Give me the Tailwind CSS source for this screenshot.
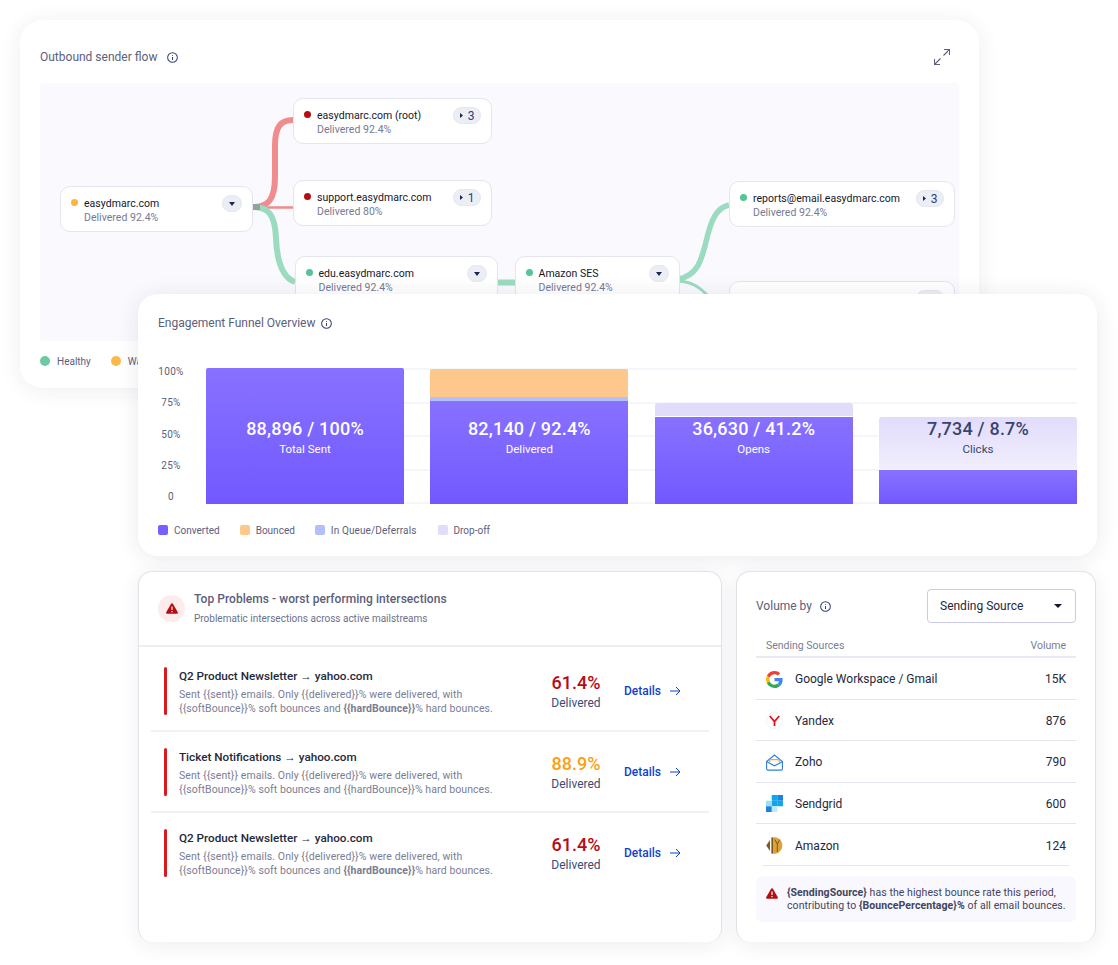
<!DOCTYPE html>
<html lang="en">
<head>
    <meta charset="UTF-8">
    <meta name="viewport" content="width=device-width, initial-scale=1.0">
    <title>Sender dashboard</title>
    <script src="https://cdn.jsdelivr.net/npm/@tailwindcss/browser@4"></script>
</head>
<body class="bg-white font-['Roboto',sans-serif] w-[1118px] h-[965px] overflow-hidden">
    <div class="pt-[20px] pl-[20px]">

        <!-- sender flow card -->
        <section class="w-[959px] h-[368px] bg-white rounded-[22px] shadow-[0_2px_22px_rgba(40,40,90,0.08)] pt-[29px] px-[20px]">
            <div class="flex items-center justify-between h-[16px]">
                <div class="flex items-center gap-[10px]">
                    <h2 class="text-[12px] leading-[16px] text-[#5b607c]">Outbound sender flow</h2>
                    <svg class="w-[11px] h-[11px]" viewBox="0 0 12 12" fill="none" stroke="#2f4078" stroke-width="1.1"><circle cx="6" cy="6" r="5.3"/><path d="M6 5.400v3.200M6 3.200v1"/></svg>
                </div>
                <svg class="w-[16px] h-[16px] mr-[9px]" viewBox="0 0 16 16" fill="none" stroke="#5b607c" stroke-width="1.100"><path d="M9.500 6.500 15.500.5M10 .5h5.500V6M6.500 9.500l-6 6M.5 10v5.500H6"/></svg>
            </div>

            <div class="relative mt-[18px] w-[919px] h-[258px] bg-[#f9f9fe] rounded-[4px]">
                <svg class="absolute inset-0 w-[919px] h-[258px]" viewBox="40 83 919 258" fill="none">
                    <path d="M253 207C268 207 275 200 275 176L275 146C275 126 281 120 293 120" stroke="#f08b8e" stroke-width="6"/>
                    <path d="M253 207.500H293" stroke="#f08b8e" stroke-width="2.500"/>
                    <path d="M253 207C268 207 275 214 276 238C277 264 284 278 295 282" stroke="#9bdbbf" stroke-width="6"/>
                    <path d="M253 204h7v6h-7z" fill="#8fa595"/>
                    <path d="M497 282.500H515" stroke="#9bdbbf" stroke-width="6"/>
                    <path d="M679 279C697 275 701 262 706 242C711 220 716 208 729 205" stroke="#9bdbbf" stroke-width="5.500"/>
                    <path d="M679 281C695 282 703 290 716 304" stroke="#9bdbbf" stroke-width="3"/>
                </svg>

                <div class="absolute left-[20px] top-[103px] w-[193px] h-[46px] flex items-start gap-[6px] bg-white border border-[#e5e5f2] rounded-[10px] pl-[10px] pr-[10px] pt-[10px]">
                    <span class="w-[7px] h-[7px] mt-[2px] rounded-full bg-[#fdb33e] shrink-0"></span>
                    <div class="text-[10.500px] leading-[14px] tracking-[0.03px]"><p class="text-[#14172b]">easydmarc.com</p><p class="text-[#767a92]">Delivered 92.4%</p></div>
                    <span class="ml-auto -mt-[2px] w-[20px] h-[17px] rounded-full bg-[#eceef6] border border-[#e4e6f0] flex items-center justify-center"><svg class="w-[6px] h-[4px]" viewBox="0 0 6 4"><path d="M0 0h6L3 4z" fill="#1c2550"/></svg></span>
                </div>

                <div class="absolute left-[253px] top-[15px] w-[199px] h-[46px] flex items-start gap-[6px] bg-white border border-[#e5e5f2] rounded-[10px] pl-[10px] pr-[10px] pt-[10px]">
                    <span class="w-[7px] h-[7px] mt-[2px] rounded-full bg-[#b50d12] shrink-0"></span>
                    <div class="text-[10.500px] leading-[14px] tracking-[0.03px]"><p class="text-[#14172b]">easydmarc.com (root)</p><p class="text-[#767a92]">Delivered 92.4%</p></div>
                    <span class="ml-auto -mt-[2px] w-[28px] h-[17px] rounded-full bg-[#eceef6] border border-[#e4e6f0] flex items-center justify-center gap-[5px] text-[12px] text-[#2f4078]"><svg class="w-[3px] h-[5px]" viewBox="0 0 3 5"><path d="M0 0v5l3-2.500z" fill="#1c2550"/></svg>3</span>
                </div>

                <div class="absolute left-[253px] top-[97px] w-[199px] h-[46px] flex items-start gap-[6px] bg-white border border-[#e5e5f2] rounded-[10px] pl-[10px] pr-[10px] pt-[10px]">
                    <span class="w-[7px] h-[7px] mt-[2px] rounded-full bg-[#b50d12] shrink-0"></span>
                    <div class="text-[10.500px] leading-[14px] tracking-[0.03px]"><p class="text-[#14172b]">support.easydmarc.com</p><p class="text-[#767a92]">Delivered 80%</p></div>
                    <span class="ml-auto -mt-[2px] w-[28px] h-[17px] rounded-full bg-[#eceef6] border border-[#e4e6f0] flex items-center justify-center gap-[5px] text-[12px] text-[#2f4078]"><svg class="w-[3px] h-[5px]" viewBox="0 0 3 5"><path d="M0 0v5l3-2.500z" fill="#1c2550"/></svg>1</span>
                </div>

                <div class="absolute left-[254.500px] top-[173px] w-[203px] h-[46px] flex items-start gap-[6px] bg-white border border-[#e5e5f2] rounded-[10px] pl-[10px] pr-[10px] pt-[10px]">
                    <span class="w-[7px] h-[7px] mt-[2px] rounded-full bg-[#54c596] shrink-0"></span>
                    <div class="text-[10.500px] leading-[14px] tracking-[0.03px]"><p class="text-[#14172b]">edu.easydmarc.com</p><p class="text-[#767a92]">Delivered 92.4%</p></div>
                    <span class="ml-auto -mt-[2px] w-[20px] h-[17px] rounded-full bg-[#eceef6] border border-[#e4e6f0] flex items-center justify-center"><svg class="w-[6px] h-[4px]" viewBox="0 0 6 4"><path d="M0 0h6L3 4z" fill="#1c2550"/></svg></span>
                </div>

                <div class="absolute left-[474.500px] top-[173px] w-[165px] h-[46px] flex items-start gap-[6px] bg-white border border-[#e5e5f2] rounded-[10px] pl-[10px] pr-[10px] pt-[10px]">
                    <span class="w-[7px] h-[7px] mt-[2px] rounded-full bg-[#54c596] shrink-0"></span>
                    <div class="text-[10.500px] leading-[14px] tracking-[0.03px]"><p class="text-[#14172b]">Amazon SES</p><p class="text-[#767a92]">Delivered 92.4%</p></div>
                    <span class="ml-auto -mt-[2px] w-[20px] h-[17px] rounded-full bg-[#eceef6] border border-[#e4e6f0] flex items-center justify-center"><svg class="w-[6px] h-[4px]" viewBox="0 0 6 4"><path d="M0 0h6L3 4z" fill="#1c2550"/></svg></span>
                </div>

                <div class="absolute left-[689px] top-[98px] w-[226px] h-[46px] flex items-start gap-[6px] bg-white border border-[#e5e5f2] rounded-[10px] pl-[10px] pr-[10px] pt-[10px]">
                    <span class="w-[7px] h-[7px] mt-[2px] rounded-full bg-[#54c596] shrink-0"></span>
                    <div class="text-[10.500px] leading-[14px] tracking-[0.03px]"><p class="text-[#14172b]">reports@email.easydmarc.com</p><p class="text-[#767a92]">Delivered 92.4%</p></div>
                    <span class="ml-auto -mt-[2px] w-[28px] h-[17px] rounded-full bg-[#eceef6] border border-[#e4e6f0] flex items-center justify-center gap-[5px] text-[12px] text-[#2f4078]"><svg class="w-[3px] h-[5px]" viewBox="0 0 3 5"><path d="M0 0v5l3-2.500z" fill="#1c2550"/></svg>3</span>
                </div>

                <div class="absolute left-[689px] top-[198px] w-[226px] h-[46px] flex items-start gap-[6px] bg-white border border-[#e5e5f2] rounded-[10px] pl-[10px] pr-[10px] pt-[10px]">
                    <span class="w-[7px] h-[7px] mt-[2px] rounded-full bg-[#54c596] shrink-0"></span>
                    <div class="text-[10.500px] leading-[14px] tracking-[0.03px]"><p class="text-[#14172b]">support@mail.easydmarc.com</p><p class="text-[#767a92]">Delivered 92.4%</p></div>
                    <span class="ml-auto -mt-[2px] w-[28px] h-[17px] rounded-full bg-[#eceef6] border border-[#e4e6f0] flex items-center justify-center gap-[5px] text-[12px] text-[#2f4078]"><svg class="w-[3px] h-[5px]" viewBox="0 0 3 5"><path d="M0 0v5l3-2.500z" fill="#1c2550"/></svg>1</span>
                </div>
            </div>

            <div class="flex items-center mt-[13px] h-[14px] text-[10px] text-[#5b607c]">
                <span class="w-[10px] h-[10px] rounded-full bg-[#6cc9a1]"></span><span class="ml-[7px]">Healthy</span>
                <span class="ml-[20px] w-[10px] h-[10px] rounded-full bg-[#fdb84c]"></span><span class="ml-[7px]">Warning</span>
            </div>
        </section>

        <div class="relative ml-[118px] -mt-[94px] w-[959px] flex flex-col gap-[15px]">

            <!-- funnel card -->
            <section class="h-[262px] bg-white rounded-[20px] shadow-[0_2px_22px_rgba(40,40,90,0.1)] pt-[21px] px-[20px]">
                <div class="flex items-center gap-[5px] h-[16px]">
                    <h2 class="text-[12px] leading-[16px] text-[#5b607c]">Engagement Funnel Overview</h2>
                    <svg class="w-[11px] h-[11px]" viewBox="0 0 12 12" fill="none" stroke="#2f4078" stroke-width="1.1"><circle cx="6" cy="6" r="5.3"/><path d="M6 5.400v3.200M6 3.200v1"/></svg>
                </div>

                <div class="flex mt-[27px] h-[150px]">
                    <div class="w-[26px] h-[139px] mt-[7px] flex flex-col justify-between text-center text-[10px] leading-[14px] tracking-[0.3px] text-[#5b607c] shrink-0">
                        <span>100%</span><span>75%</span><span>50%</span><span>25%</span><span>0</span>
                    </div>
                    <div class="relative ml-[22px] w-[871px] h-[136px] mt-[10px]">
                        <div class="absolute inset-0 flex flex-col justify-between">
                            <div class="h-[2px] bg-[#f5f6fc]"></div><div class="h-[2px] bg-[#f5f6fc]"></div><div class="h-[2px] bg-[#f5f6fc]"></div><div class="h-[2px] bg-[#f5f6fc]"></div><div class="h-[2px] bg-[#f5f6fc]"></div>
                        </div>
                        <div class="relative h-full flex items-end justify-between">
                            <div class="relative w-[198px] h-[136px] rounded-t-[2px] bg-gradient-to-b from-[#8871ff] to-[#7258ff] text-center text-white">
                                <div class="absolute inset-x-0 top-[50px]"><p class="text-[18px] leading-[22px] font-medium tracking-[0.2px]">88,896 / 100%</p><p class="text-[11.500px] leading-[16px] mt-[1px]">Total Sent</p></div>
                            </div>
                            <div class="relative w-[198px] h-[135px] text-center text-white flex flex-col">
                                <div class="h-[28px] bg-[#fec88c] rounded-t-[2px]"></div>
                                <div class="h-[4px] bg-[#b1c0fb]"></div>
                                <div class="flex-1 bg-gradient-to-b from-[#8871ff] to-[#7258ff]"></div>
                                <div class="absolute inset-x-0 top-[49px]"><p class="text-[18px] leading-[22px] font-medium tracking-[0.2px]">82,140 / 92.4%</p><p class="text-[11.500px] leading-[16px] mt-[1px]">Delivered</p></div>
                            </div>
                            <div class="relative w-[198px] h-[101px] text-center text-white flex flex-col">
                                <div class="h-[13px] bg-[#e2dcfb] rounded-t-[3px] mb-[1px]"></div>
                                <div class="flex-1 bg-gradient-to-b from-[#8871ff] to-[#7258ff]"></div>
                                <div class="absolute inset-x-0 top-[15px]"><p class="text-[18px] leading-[22px] font-medium tracking-[0.2px]">36,630 / 41.2%</p><p class="text-[11.500px] leading-[16px] mt-[1px]">Opens</p></div>
                            </div>
                            <div class="relative w-[198px] h-[87px] text-center text-[#35456f] flex flex-col">
                                <div class="h-[52px] bg-gradient-to-b from-[#e2dcfb] to-[#f1eefd] rounded-t-[3px] mb-[1px]"></div>
                                <div class="flex-1 bg-gradient-to-b from-[#8871ff] to-[#7258ff]"></div>
                                <div class="absolute inset-x-0 top-[1px]"><p class="text-[18px] leading-[22px] font-medium tracking-[0.2px]">7,734 / 8.7%</p><p class="text-[11.500px] leading-[16px] mt-[1px]">Clicks</p></div>
                            </div>
                        </div>
                    </div>
                </div>

                <div class="flex items-center mt-[15px] h-[14px] text-[10px] text-[#5b607c]">
                    <span class="w-[10px] h-[10px] rounded-[2px] bg-[#7660ff]"></span><span class="ml-[6px]">Converted</span>
                    <span class="ml-[20px] w-[10px] h-[10px] rounded-[2px] bg-[#fec88c]"></span><span class="ml-[6px]">Bounced</span>
                    <span class="ml-[20px] w-[10px] h-[10px] rounded-[2px] bg-[#b1c0fb]"></span><span class="ml-[6px] tracking-[0.12px]">In Queue/Deferrals</span>
                    <span class="ml-[21px] w-[10px] h-[10px] rounded-[2px] bg-[#e2dcfb]"></span><span class="ml-[6px]">Drop-off</span>
                </div>
            </section>

            <div class="flex gap-[14px] h-[371px]">

                <!-- top problems -->
                <section class="w-[584px] bg-white rounded-[14px] border-x border-t border-[#e2e3e9] shadow-[0_4px_20px_rgba(40,40,90,0.08)]">
                    <div class="h-[75px] pl-[19px] flex items-center gap-[9px] border-b-2 border-[#eceef5]">
                        <span class="w-[27px] h-[27px] rounded-full bg-[#fdeceb] flex items-center justify-center">
                            <svg class="w-[12px] h-[11px]" viewBox="0 0 12 11"><path fill-rule="evenodd" d="M6 0.200a1 1 0 0 1 .9.500l4.900 8.600a1 1 0 0 1-.9 1.500H1.100a1 1 0 0 1-.9-1.500L5.100.700A1 1 0 0 1 6 .200zM5.400 3.500v3.500h1.200V3.500zM5.400 8v1.200h1.200V8z" fill="#b50d12"/></svg>
                        </span>
                        <div>
                            <h2 class="text-[12px] leading-[16px] font-medium tracking-[0.05px] text-[#5b607c]">Top Problems - worst performing intersections</h2>
                            <p class="mt-[5px] text-[10px] leading-[14px] text-[#6d7189]">Problematic intersections across active mailstreams</p>
                        </div>
                    </div>
                    <div class="mx-[12px] pt-[4px]">
                        <div class="h-[81px] flex items-center pl-[13px] border-b-2 border-[#f0f1f7]">
                            <span class="w-[3px] h-[48px] rounded-full bg-[#d91a1f]"></span>
                            <div class="ml-[12px] mt-[2px] w-[357px]">
                                <p class="text-[11.700px] leading-[16px] font-medium text-[#24283c]">Q2 Product Newsletter → yahoo.com</p>
                                <p class="mt-[4px] text-[10.500px] leading-[14px] tracking-[0.08px] text-[#7a7d95]">Sent {{sent}} emails. Only {{delivered}}% were delivered, with<br>{{softBounce}}% soft bounces and <b class="font-bold">{{hardBounce}}</b>% hard bounces.</p>
                            </div>
                            <div class="w-[80px] mt-[2px] text-center"><p class="text-[18px] leading-[22px] font-medium text-[#b50d12]">61.4%</p><p class="mt-[1px] text-[12px] leading-[16px] text-[#3c4a78]">Delivered</p></div>
                            <a class="ml-[8px] flex items-center gap-[9px] text-[12px] font-medium text-[#0f3fd0]" href="#">Details <svg class="w-[11px] h-[10px]" viewBox="0 0 11 10" fill="none" stroke="#0f3fd0"><path d="M0 5h10M6 1l4 4-4 4"/></svg></a>
                        </div>
                        <div class="h-[81px] flex items-center pl-[13px] border-b-2 border-[#f0f1f7]">
                            <span class="w-[3px] h-[48px] rounded-full bg-[#d91a1f]"></span>
                            <div class="ml-[12px] mt-[2px] w-[357px]">
                                <p class="text-[11.700px] leading-[16px] font-medium text-[#24283c]">Ticket Notifications → yahoo.com</p>
                                <p class="mt-[4px] text-[10.500px] leading-[14px] tracking-[0.08px] text-[#7a7d95]">Sent {{sent}} emails. Only {{delivered}}% were delivered, with<br>{{softBounce}}% soft bounces and {{hardBounce}}% hard bounces.</p>
                            </div>
                            <div class="w-[80px] mt-[2px] text-center"><p class="text-[18px] leading-[22px] font-medium text-[#fb9e14]">88.9%</p><p class="mt-[1px] text-[12px] leading-[16px] text-[#3c4a78]">Delivered</p></div>
                            <a class="ml-[8px] flex items-center gap-[9px] text-[12px] font-medium text-[#0f3fd0]" href="#">Details <svg class="w-[11px] h-[10px]" viewBox="0 0 11 10" fill="none" stroke="#0f3fd0"><path d="M0 5h10M6 1l4 4-4 4"/></svg></a>
                        </div>
                        <div class="h-[79px] flex items-center pl-[13px]">
                            <span class="w-[3px] h-[48px] rounded-full bg-[#d91a1f]"></span>
                            <div class="ml-[12px] mt-[2px] w-[357px]">
                                <p class="text-[11.700px] leading-[16px] font-medium text-[#24283c]">Q2 Product Newsletter → yahoo.com</p>
                                <p class="mt-[4px] text-[10.500px] leading-[14px] tracking-[0.08px] text-[#7a7d95]">Sent {{sent}} emails. Only {{delivered}}% were delivered, with<br>{{softBounce}}% soft bounces and <b class="font-bold">{{hardBounce}}</b>% hard bounces.</p>
                            </div>
                            <div class="w-[80px] mt-[2px] text-center"><p class="text-[18px] leading-[22px] font-medium text-[#b50d12]">61.4%</p><p class="mt-[1px] text-[12px] leading-[16px] text-[#3c4a78]">Delivered</p></div>
                            <a class="ml-[8px] flex items-center gap-[9px] text-[12px] font-medium text-[#0f3fd0]" href="#">Details <svg class="w-[11px] h-[10px]" viewBox="0 0 11 10" fill="none" stroke="#0f3fd0"><path d="M0 5h10M6 1l4 4-4 4"/></svg></a>
                        </div>
                    </div>
                </section>

                <!-- volume by source -->
                <section class="w-[360px] bg-white rounded-[14px] border-x border-t border-[#e2e3e9] shadow-[0_4px_20px_rgba(40,40,90,0.08)] px-[19px] pt-[17px]">
                    <div class="flex items-center justify-between h-[34px]">
                        <div class="flex items-center gap-[8px]">
                            <h2 class="text-[12px] text-[#5b607c]">Volume by</h2>
                            <svg class="w-[11px] h-[11px]" viewBox="0 0 12 12" fill="none" stroke="#2f4078" stroke-width="1.1"><circle cx="6" cy="6" r="5.3"/><path d="M6 5.400v3.200M6 3.200v1"/></svg>
                        </div>
                        <div class="w-[149px] h-[34px] border border-[#c9cbe8] rounded-[4px] pl-[12px] pr-[13px] flex items-center justify-between text-[12px] text-[#24283c]">
                            Sending Source
                            <svg class="w-[8px] h-[4px]" viewBox="0 0 8 4"><path d="M0 0h8L4 4z" fill="#14172b"/></svg>
                        </div>
                    </div>
                    <div class="mt-[11px] h-[24px] px-[10px] pb-[3px] flex items-end justify-between border-b-2 border-[#e9eaf4] text-[10.500px] leading-[14px] text-[#7a7d95]">
                        <span>Sending Sources</span><span>Volume</span>
                    </div>
                    <div class="h-[41.500px] px-[10px] pt-[2px] flex items-center text-[12px] text-[#24283c] border-b border-[#e4e5f1]">
                        <svg class="w-[17px] h-[17px]" viewBox="0 0 48 48"><path fill="#EA4335" d="M24 9.500c3.500 0 6.700 1.200 9.200 3.600l6.900-6.900C35.900 2.400 30.500 0 24 0 14.600 0 6.500 5.400 2.600 13.200l8 6.200C12.500 13.700 17.800 9.500 24 9.500z"/><path fill="#4285F4" d="M46.900 24.500c0-1.600-.1-3.100-.4-4.500H24v9h12.900c-.6 3-2.200 5.500-4.700 7.200l7.700 6c4.500-4.200 7-10.300 7-17.700z"/><path fill="#FBBC05" d="M10.500 28.600c-.5-1.400-.8-3-.8-4.600s.3-3.200.8-4.600l-8-6.200C.9 16.500 0 20.100 0 24s.9 7.500 2.600 10.800l7.900-6.200z"/><path fill="#34A853" d="M24 48c6.500 0 11.900-2.100 15.900-5.800l-7.700-6c-2.200 1.500-4.900 2.300-8.200 2.300-6.200 0-11.500-4.200-13.400-9.900l-8 6.200C6.500 42.600 14.600 48 24 48z"/></svg>
                        <span class="ml-[12px]">Google Workspace / Gmail</span><span class="ml-auto">15K</span>
                    </div>
                    <div class="h-[41.500px] px-[10px] pt-[2px] flex items-center text-[12px] text-[#24283c] border-b border-[#e4e5f1]">
                        <svg class="w-[17px] h-[17px]" viewBox="0 0 17 17" fill="none"><circle cx="8.500" cy="8.500" r="8.200" fill="#fff" stroke="#ececf1" stroke-width=".6"/><path d="M3.800 4 8.500 9.500 13.200 4M8.500 9.500V14" stroke="#e0141b" stroke-width="1.800"/></svg>
                        <span class="ml-[12px]">Yandex</span><span class="ml-auto">876</span>
                    </div>
                    <div class="h-[41.500px] px-[10px] pt-[2px] flex items-center text-[12px] text-[#24283c] border-b border-[#e4e5f1]">
                        <svg class="w-[17px] h-[17px]" viewBox="0 0 17 17" fill="none"><path d="M.6 7.500 8.500 1l7.900 6.500v7.300a1.300 1.300 0 0 1-1.300 1.300H1.900a1.300 1.300 0 0 1-1.300-1.300z" stroke="#2f7de1" stroke-width="1.100" fill="#fff"/><path d="M3.600 8.200V6.800a1.100 1.100 0 0 1 1.100-1.100h7.600a1.100 1.100 0 0 1 1.100 1.100v1.400" stroke="#f5ad1c" stroke-width="1.300"/><path d="M.8 7.800l7.700 4 7.700-4" stroke="#2f7de1" stroke-width="1.100"/></svg>
                        <span class="ml-[12px]">Zoho</span><span class="ml-auto">790</span>
                    </div>
                    <div class="h-[41.500px] px-[10px] pt-[2px] flex items-center text-[12px] text-[#24283c] border-b border-[#e4e5f1]">
                        <svg class="w-[17px] h-[17px]" viewBox="0 0 17 17"><path d="M11.300 0H17v5.700h-5.700z" fill="#1a82e2"/><path d="M5.700 0h5.700v5.700H5.700zM11.300 5.700H17v5.600h-5.700z" fill="#12a5ea"/><path d="M5.700 5.700h5.700v5.600H5.700z" fill="#12a5ea"/><path d="M0 5.700h5.700v5.600H0z" fill="#99e1f4"/><path d="M5.700 11.300h5.700V17H5.700z" fill="#bfe8f8"/><path d="M0 11.300h5.700V17H0z" fill="#1a82e2"/></svg>
                        <span class="ml-[12px]">Sendgrid</span><span class="ml-auto">600</span>
                    </div>
                    <div class="relative h-[41.500px] px-[10px] pt-[2px] flex items-center text-[12px] text-[#24283c]">
                        <svg class="w-[17px] h-[17px]" viewBox="0 0 17 17" fill="none"><path d="M5.500 .6A8.300 8.300 0 1 1 5.500 16.400z" fill="#dca23e"/><path d="M4 3v11L.2 8.500z" fill="#7f5a1c"/><path d="M5.500 .6h1.500v15.800H5.500z" fill="#7f5a1c"/><path d="M8.800 2.500 11.300 7l2.500-4.500M11.300 7v8" stroke="#7f5a1c" stroke-width="1"/></svg>
                        <span class="ml-[12px]">Amazon</span><span class="ml-auto">124</span>
                        <div class="absolute left-[7px] right-[7px] bottom-0 h-px bg-[#e4e5f1]"></div>
                    </div>
                    <div class="mt-[10px] h-[46px] bg-[#f8f8fe] rounded-[6px] pl-[10px] flex items-center gap-[9px]">
                        <svg class="w-[12px] h-[11px] shrink-0 -mt-[11px]" viewBox="0 0 12 11"><path fill-rule="evenodd" d="M6 0.200a1 1 0 0 1 .9.500l4.900 8.600a1 1 0 0 1-.9 1.500H1.100a1 1 0 0 1-.9-1.500L5.100.700A1 1 0 0 1 6 .200zM5.400 3.500v3.500h1.200V3.500zM5.400 8v1.200h1.200V8z" fill="#b50d12"/></svg>
                        <p class="text-[10.500px] leading-[13px] tracking-[0.08px] text-[#3f4460]"><b class="font-bold">{SendingSource}</b> has the highest bounce rate this period,<br>contributing to <b class="font-bold">{BouncePercentage}%</b> of all email bounces.</p>
                    </div>
                </section>
            </div>
        </div>
    </div>
</body>
</html>
